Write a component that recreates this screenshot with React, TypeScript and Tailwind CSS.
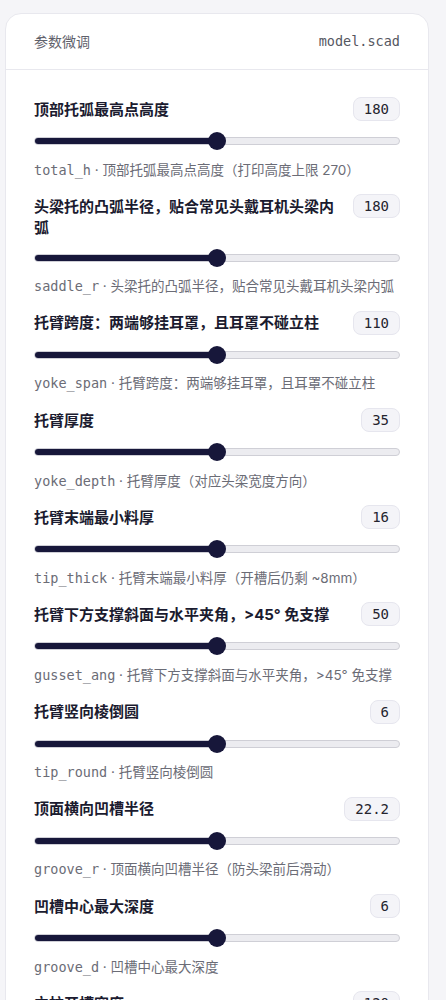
const params = [
  { label: "顶部托弧最高点高度", value: "180", name: "total_h", desc: "顶部托弧最高点高度（打印高度上限 270）" },
  { label: "头梁托的凸弧半径，贴合常见头戴耳机头梁内弧", value: "180", name: "saddle_r", desc: "头梁托的凸弧半径，贴合常见头戴耳机头梁内弧" },
  { label: "托臂跨度：两端够挂耳罩，且耳罩不碰立柱", value: "110", name: "yoke_span", desc: "托臂跨度：两端够挂耳罩，且耳罩不碰立柱" },
  { label: "托臂厚度", value: "35", name: "yoke_depth", desc: "托臂厚度（对应头梁宽度方向）" },
  { label: "托臂末端最小料厚", value: "16", name: "tip_thick", desc: "托臂末端最小料厚（开槽后仍剩 ~8mm）" },
  { label: "托臂下方支撑斜面与水平夹角，>45° 免支撑", value: "50", name: "gusset_ang", desc: "托臂下方支撑斜面与水平夹角，>45° 免支撑" },
  { label: "托臂竖向棱倒圆", value: "6", name: "tip_round", desc: "托臂竖向棱倒圆" },
  { label: "顶面横向凹槽半径", value: "22.2", name: "groove_r", desc: "顶面横向凹槽半径（防头梁前后滑动）" },
  { label: "凹槽中心最大深度", value: "6", name: "groove_d", desc: "凹槽中心最大深度" },
  { label: "立柱开槽宽度", value: "120", name: "slot_w", desc: "立柱开槽宽度" },
];

const sans = "font-['Inter','Noto_Sans_CJK_SC',sans-serif]";
const mono = "font-['DejaVu_Sans_Mono',monospace]";

function Slider({ pct }: { pct: number }) {
  return (
    <div className="relative h-[18px] flex items-center">
      <div className="relative h-[8px] w-full rounded-full bg-[#ececf0] border border-[#cfcfd6] overflow-hidden">
        <div className="h-full bg-[#17173a]" style={{ width: `${pct}%` }} />
      </div>
      {/* thumb */}
      <div
        className="absolute top-0 h-[18px] w-[18px] -ml-[9px] rounded-full bg-[#17173a]"
        style={{ left: `${pct}%` }}
      />
    </div>
  );
}

export default function App() {
  return (
    <div className={`min-h-screen bg-[#f5f5f8] pt-[13px] ${sans}`}>
      <div className="ml-[5px] w-[424px] rounded-[16px] border border-[#e8e8ee] bg-white">
        {/* header */}
        <div className="flex h-[56px] items-center justify-between border-b border-[#e8e8ee] px-[28px]">
          <span className="text-[14px] text-[#5f616b]">参数微调</span>
          <span className={`${mono} text-[13.5px] text-[#55575f]`}>model.scad</span>
        </div>

        {/* params */}
        <div className="flex flex-col gap-[14.2px] px-[28px] pt-[27px] pb-6">
          {params.map((p) => (
            <div key={p.name}>
              <div className="flex items-start justify-between gap-4">
                <div className="pt-[1.5px] text-[15px] font-bold leading-[21px] text-[#1b1b2f]">{p.label}</div>
                <div
                  className={`${mono} shrink-0 h-[24px] rounded-[8px] border border-[#e6e6ee] bg-[#f4f4f8] px-[10px] text-[14px] leading-[22px] text-[#24242e]`}
                >
                  {p.value}
                </div>
              </div>
              <div className="mt-[11px]">
                <Slider pct={50} />
              </div>
              <div className="mt-[10.5px] text-[13.5px] leading-[19.5px] text-[#6b6c76] whitespace-nowrap">
                <span className={mono}>{p.name}</span>
                <span> · {p.desc}</span>
              </div>
            </div>
          ))}
        </div>
      </div>
    </div>
  );
}
